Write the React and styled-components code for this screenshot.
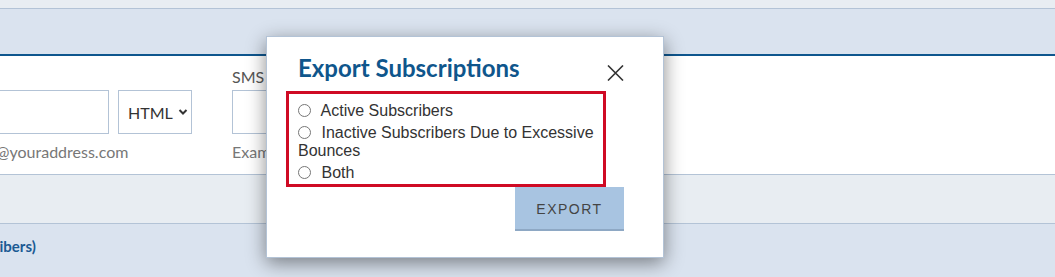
import React from 'react';
import styled, { createGlobalStyle } from 'styled-components';

const GlobalStyle = createGlobalStyle`
  html, body {
    margin: 0;
    padding: 0;
    background: #dae3ef;
    font-family: Lato, "Liberation Sans", sans-serif;
    overflow: hidden;
  }
`;

const Page = styled.div`
  position: relative;
  width: 1055px;
  height: 277px;
  overflow: hidden;
`;

const TopStrip = styled.div`
  height: 8px;
  background: #e8edf2;
  border-bottom: 1px solid #b3c3d6;
`;

const HeaderBand = styled.div`
  height: 45px;
  background: #dae3ef;
  border-bottom: 2px solid #0e568e;
`;

const FormPanel = styled.div`
  height: 119px;
  background: #fff;
  border-bottom: 1px solid #b3c3d6;
  display: flex;
  align-items: flex-start;
  gap: 40px;
  margin-left: -110px;
  padding-top: 12px;
  box-sizing: border-box;
`;

const Field = styled.div`
  display: flex;
  flex-direction: column;
`;

const Label = styled.label`
  font-size: 16px;
  color: #555;
  height: 18px;
  line-height: 18px;
  margin-bottom: 4px;
`;

const InputRow = styled.div`
  display: flex;
  gap: 9px;
`;

const TextBox = styled.div`
  width: ${({ $w }) => $w}px;
  height: 44px;
  box-sizing: border-box;
  border: 1px solid #b3c3d6;
  background: #fff;
`;

const Select = styled.div`
  width: 74px;
  height: 44px;
  box-sizing: border-box;
  border: 1px solid #b3c3d6;
  display: flex;
  align-items: center;
  padding-left: 9px;
  gap: 5px;
  font-size: 16px;
  color: #333;
`;

const Helper = styled.div`
  margin-top: 8px;
  font-size: 16px;
  color: #777;
  white-space: nowrap;
`;

const SearchButton = styled.div`
  margin-top: 11px;
  height: 44px;
  width: 120px;
  box-sizing: border-box;
  background: #a8c4e1;
  border-bottom: 2px solid #8ea8c4;
  display: flex;
  align-items: center;
  justify-content: flex-end;
  padding-right: 26px;
  font-family: "Liberation Sans", Arial, sans-serif;
  font-size: 14px;
  letter-spacing: 1.5px;
  color: #444;
`;

const GrayBand = styled.div`
  height: 48px;
  background: #e8edf2;
  border-bottom: 1px solid #b3c3d6;
`;

const BlueBand = styled.div`
  height: 52px;
  background: #dae3ef;
  display: flex;
  align-items: center;
  padding-bottom: 8px;
  box-sizing: border-box;
  margin-left: -154px;
  font-size: 15px;
  font-weight: 700;
  color: #1b5a93;
  white-space: nowrap;
`;

const Modal = styled.div`
  position: absolute;
  left: 266px;
  top: 36px;
  width: 398px;
  height: 222px;
  box-sizing: border-box;
  background: #fff;
  border: 1px solid #b3c3d6;
  box-shadow: 0 5px 18px rgba(0, 0, 0, 0.45);
  padding: 16px 39px 0 31px;
  display: flex;
  flex-direction: column;
`;

const ModalHeader = styled.div`
  display: flex;
  justify-content: space-between;
  align-items: flex-start;
`;

const Title = styled.h2`
  margin: 0;
  font-size: 24px;
  line-height: 29px;
  font-weight: 700;
  color: #0f568c;
`;

const CloseButton = styled.button`
  margin-top: 12px;
  width: 17px;
  height: 16px;
  padding: 0;
  border: none;
  background: none;
  display: block;
  cursor: pointer;
`;

const OptionGroup = styled.div`
  margin: 9px 0 0 -12px;
  width: 320px;
  box-sizing: border-box;
  border: 3px solid #cf0a24;
  padding: 8px 6px 2px 9px;
  font-family: "Liberation Sans", Arial, sans-serif;
  font-size: 16px;
  line-height: 18px;
  color: #333;
`;

const Option = styled.label`
  display: block;
  margin-bottom: 4px;

  &:last-child {
    margin-bottom: 0;
  }

  input {
    margin: 0 6px 0 0;
    width: 13px;
    height: 13px;
    vertical-align: -1px;
  }
`;

const ExportButton = styled.button`
  align-self: flex-end;
  width: 109px;
  height: 44px;
  border: none;
  border-bottom: 2px solid #8ea8c4;
  background: #a8c4e1;
  font-family: "Liberation Sans", Arial, sans-serif;
  font-size: 14px;
  letter-spacing: 1.5px;
  color: #444;
  padding: 2px 0 0;
  cursor: pointer;
`;

const options = [
  'Active Subscribers',
  'Inactive Subscribers Due to Excessive Bounces',
  'Both',
];

export default function App() {
  return (
    <Page>
      <GlobalStyle />
      <TopStrip />
      <HeaderBand />
      <FormPanel>
        <Field>
          <Label>Email</Label>
          <InputRow>
            <TextBox $w={219} />
            <Select>
              HTML
              <svg width="10" height="8" viewBox="0 0 10 8">
                <path d="M1.5 2 L5 5.5 L8.5 2" fill="none" stroke="#333" strokeWidth="2" />
              </svg>
            </Select>
          </InputRow>
          <Helper>Example: name@youraddress.com</Helper>
        </Field>
        <Field>
          <Label>SMS</Label>
          <InputRow>
            <TextBox $w={200} />
          </InputRow>
          <Helper>Example: 5555555555</Helper>
        </Field>
        <SearchButton>ADD</SearchButton>
      </FormPanel>
      <GrayBand />
      <BlueBand>View All (Active Subscribers)</BlueBand>

      <Modal>
        <ModalHeader>
          <Title>Export Subscriptions</Title>
          <CloseButton aria-label="Close">
            <svg width="17" height="16" viewBox="0 0 17 16">
              <path d="M1 0.5 L16 15.5 M16 0.5 L1 15.5" stroke="#333" strokeWidth="1.6" fill="none" />
            </svg>
          </CloseButton>
        </ModalHeader>
        <OptionGroup>
          {options.map((o) => (
            <Option key={o}>
              <input type="radio" name="export" /> {o}
            </Option>
          ))}
        </OptionGroup>
        <ExportButton>EXPORT</ExportButton>
      </Modal>
    </Page>
  );
}
